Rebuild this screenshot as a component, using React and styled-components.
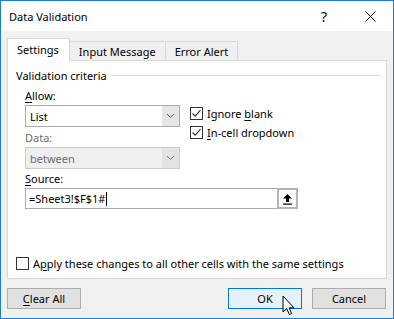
import React from 'react'
import styled, { createGlobalStyle, css } from 'styled-components'

const GlobalStyle = createGlobalStyle`
  html, body {
    margin: 0;
    padding: 0;
    background: #ffffff;
  }
  * {
    box-sizing: border-box;
  }
`

const Window = styled.div`
  position: relative;
  width: 394px;
  height: 319px;
  border: 1px solid #1a7fd4;
  background-color: #f0f0f0;
  display: flex;
  flex-direction: column;
  font-family: "Segoe UI", "Noto Sans", sans-serif;
  font-size: 11px;
  color: #000000;
  overflow: hidden;
`

const TitleBar = styled.div`
  height: 30px;
  background-color: #ffffff;
  display: flex;
  align-items: center;
  padding-left: 8px;
  font-size: 11px;
`

const Title = styled.div`
  flex: 1;
`

const TitleButton = styled.div`
  width: 46px;
  height: 30px;
  display: flex;
  align-items: center;
  justify-content: center;
  font-size: 14px;
`

const Body = styled.div`
  flex: 1;
  display: flex;
  flex-direction: column;
  padding: 7px 6px 0 6px;
`

const TabStrip = styled.div`
  display: flex;
  align-items: flex-end;
  height: 22px;
  position: relative;
  z-index: 1;
`

const Tab = styled.div`
  height: 19px;
  padding: 0 9px;
  border: 1px solid #d9d9d9;
  border-bottom: none;
  background-color: #f0f0f0;
  display: flex;
  align-items: center;
  margin-left: -1px;
  white-space: nowrap;
  ${({ $active }) => $active && css`
    height: 23px;
    margin-left: 0;
    margin-bottom: -1px;
    background-color: #ffffff;
    padding: 0 10px 2px 9px;
  `}
`

const Panel = styled.div`
  height: 219px;
  background-color: #ffffff;
  border: 1px solid #d9d9d9;
  display: flex;
  flex-direction: column;
  padding: 6px 6px 8px 8px;
`

const GroupHeader = styled.div`
  display: flex;
  align-items: center;
  height: 16px;
  gap: 4px;
`

const GroupLine = styled.div`
  flex: 1;
  height: 1px;
  background-color: #dcdcdc;
`

const Criteria = styled.div`
  display: grid;
  grid-template-columns: 155px auto;
  column-gap: 10px;
  padding-left: 9px;
  margin-top: 5px;
`

const Column = styled.div`
  display: flex;
  flex-direction: column;
`

const Wide = styled.div`
  grid-column: 1 / span 2;
  display: flex;
  flex-direction: column;
`

const Label = styled.div`
  height: 16px;
  line-height: 16px;
  margin-bottom: 1px;
  color: ${({ $disabled }) => ($disabled ? '#6d6d6d' : '#000000')};
`

const U = styled.span`
  text-decoration: underline;
  text-underline-offset: 2px;
`

const Select = styled.div`
  width: 155px;
  height: 22px;
  display: flex;
  border: 1px solid ${({ $disabled }) => ($disabled ? '#cccccc' : '#acacac')};
  background-color: ${({ $disabled }) => ($disabled ? '#efefef' : '#ffffff')};
  color: ${({ $disabled }) => ($disabled ? '#6d6d6d' : '#000000')};
  margin-bottom: ${({ $gap }) => $gap || 0}px;
`

const SelectValue = styled.div`
  flex: 1;
  display: flex;
  align-items: center;
  padding-left: 4px;
`

const SelectArrow = styled.div`
  width: 17px;
  display: flex;
  align-items: center;
  justify-content: center;
  background-color: ${({ $disabled }) => ($disabled ? '#e3e3e3' : '#e5e5e5')};
`

const SourceRow = styled.div`
  width: 273px;
  height: 21px;
  display: flex;
  border: 1px solid #acacac;
  background-color: #ffffff;
`

const SourceText = styled.div`
  flex: 1;
  display: flex;
  align-items: center;
  padding-left: 3px;
`

const Caret = styled.span`
  display: inline-block;
  width: 1px;
  height: 14px;
  background-color: #000000;
  margin-left: 1px;
`

const CollapseButton = styled.div`
  width: 21px;
  border: 2px solid #b4b4b4;
  margin: -1px -1px -1px 0;
  background-color: #fdfdfd;
  display: flex;
  align-items: center;
  justify-content: center;
`

const Checks = styled.div`
  display: flex;
  flex-direction: column;
  gap: 6px;
  padding-top: 19px;
`

const CheckRow = styled.div`
  display: flex;
  align-items: center;
  gap: 4px;
  height: 13px;
  white-space: nowrap;
`

const Box = styled.div`
  width: 13px;
  height: 13px;
  flex: none;
  border: 1px solid #333333;
  background-color: #ffffff;
  display: flex;
  align-items: center;
  justify-content: center;
`

const Spacer = styled.div`
  flex: 1;
`

const Footer = styled.div`
  display: flex;
  margin-top: 9px;
`

const Button = styled.div`
  width: 74px;
  height: 21px;
  border: 1px solid ${({ $primary }) => ($primary ? '#0078d7' : '#adadad')};
  background-color: ${({ $primary }) => ($primary ? '#e5f1fb' : '#e1e1e1')};
  display: flex;
  align-items: center;
  justify-content: center;
  margin-left: ${({ $ml }) => $ml || 0}px;
`

const Cursor = styled.svg`
  position: absolute;
  left: 281px;
  top: 294px;
`

const Check = () => (
  <svg width="11" height="11" viewBox="0 0 11 11">
    <path d="M1.5 5.5 L4.2 8.2 L9.5 2.2" fill="none" stroke="#333333" strokeWidth="1.1" />
  </svg>
)

const Chevron = ({ color }) => (
  <svg width="9" height="6" viewBox="0 0 9 6">
    <path d="M1 1 L4.5 4.5 L8 1" fill="none" stroke={color} strokeWidth="1" />
  </svg>
)

export default function App() {
  return (
    <>
      <GlobalStyle />
      <Window>
        <TitleBar>
          <Title>Data Validation</Title>
          <TitleButton>?</TitleButton>
          <TitleButton>
            <svg width="11" height="11" viewBox="0 0 11 11">
              <path d="M0.5 0.5 L10.5 10.5 M10.5 0.5 L0.5 10.5" stroke="#000000" strokeWidth="1" />
            </svg>
          </TitleButton>
        </TitleBar>
        <Body>
          <TabStrip>
            <Tab $active>Settings</Tab>
            <Tab>Input Message</Tab>
            <Tab>Error Alert</Tab>
          </TabStrip>
          <Panel>
            <GroupHeader>
              Validation criteria
              <GroupLine />
            </GroupHeader>
            <Criteria>
              <Column>
                <Label><U>A</U>llow:</Label>
                <Select $gap={3}>
                  <SelectValue>List</SelectValue>
                  <SelectArrow><Chevron color="#606060" /></SelectArrow>
                </Select>
                <Label $disabled>Data:</Label>
                <Select $disabled $gap={2}>
                  <SelectValue>between</SelectValue>
                  <SelectArrow $disabled><Chevron color="#7a7a7a" /></SelectArrow>
                </Select>
              </Column>
              <Checks>
                <CheckRow>
                  <Box><Check /></Box>
                  <span>Ignore <U>b</U>lank</span>
                </CheckRow>
                <CheckRow>
                  <Box><Check /></Box>
                  <span><U>I</U>n-cell dropdown</span>
                </CheckRow>
              </Checks>
              <Wide>
                <Label><U>S</U>ource:</Label>
                <SourceRow>
                  <SourceText>=Sheet3!$F$1#<Caret /></SourceText>
                  <CollapseButton>
                    <svg width="11" height="12" viewBox="0 0 11 12">
                      <path d="M5.5 1 L10 5.5 L7 5.5 L7 9 L4 9 L4 5.5 L1 5.5 Z" fill="#000000" />
                      <rect x="1" y="10.5" width="9" height="1.2" fill="#000000" />
                    </svg>
                  </CollapseButton>
                </SourceRow>
              </Wide>
            </Criteria>
            <Spacer />
            <CheckRow>
              <Box />
              <span>A<U>p</U>ply these changes to all other cells with the same settings</span>
            </CheckRow>
          </Panel>
          <Footer>
            <Button><span><U>C</U>lear All</span></Button>
            <Button $primary $ml={147}>OK</Button>
            <Button $ml={10}>Cancel</Button>
          </Footer>
        </Body>
        <Cursor width="14" height="22" viewBox="0 0 14 22">
          <path d="M1 1 L1 17 L4.8 13.6 L7.4 19.6 L9.6 18.6 L7.1 12.8 L12 12.8 Z" fill="#ffffff" stroke="#000000" strokeWidth="1" strokeLinejoin="round" />
        </Cursor>
      </Window>
    </>
  )
}
